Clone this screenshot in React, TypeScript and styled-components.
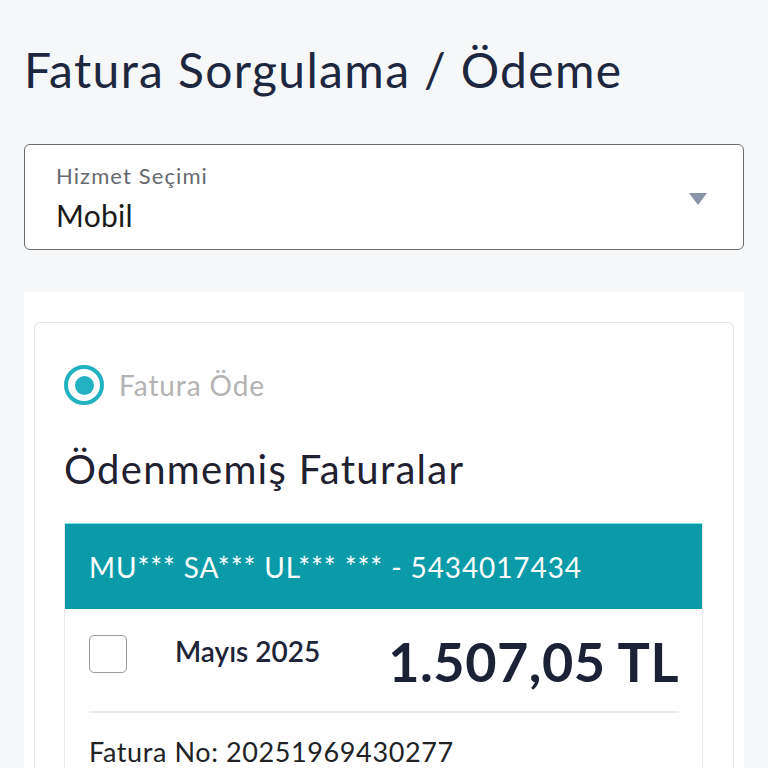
import { createGlobalStyle, styled } from 'styled-components';

const GlobalStyle = createGlobalStyle`
  html, body {
    margin: 0;
    padding: 0;
    background: #f6f7f9;
    font-family: Lato, "Noto Sans", sans-serif;
  }
  * {
    box-sizing: border-box;
  }
`;

const Page = styled.div`
  padding: 0 24px;
  min-height: 768px;
  display: flex;
  flex-direction: column;
`;

const Title = styled.h1`
  margin: 40px 0 0;
  font-size: 48px;
  line-height: 60px;
  font-weight: 400;
  color: #1e2740;
  letter-spacing: 1.35px;
`;

const Select = styled.div`
  margin-top: 44px;
  height: 106px;
  background: #ffffff;
  border: 1px solid #6c6c6c;
  border-radius: 6px;
  padding: 17px 36px 0 31px;
  display: flex;
  align-items: center;
  justify-content: space-between;
`;

const SelectText = styled.div`
  display: flex;
  flex-direction: column;
  align-self: flex-start;
`;

const SelectLabel = styled.span`
  font-size: 22px;
  line-height: 28px;
  color: #666a70;
  letter-spacing: 1.1px;
`;

const SelectValue = styled.span`
  margin-top: 6px;
  font-size: 30px;
  line-height: 38px;
  color: #1a1a1a;
  letter-spacing: 0.3px;
`;

const Arrow = styled.span`
  width: 0;
  height: 0;
  border-left: 9px solid transparent;
  border-right: 9px solid transparent;
  border-top: 12px solid #8a94aa;
  margin-top: -14px;
`;

const Panel = styled.div`
  margin-top: 42px;
  flex: 1;
  background: #ffffff;
  padding: 30px 10px 0;
`;

const Card = styled.div`
  border: 1px solid #e4e6e9;
  border-bottom: none;
  border-radius: 6px 6px 0 0;
  padding: 42px 30px 0 29px;
`;

const RadioRow = styled.label`
  display: flex;
  align-items: center;
  gap: 15px;
`;

const Radio = styled.span`
  width: 40px;
  height: 40px;
  border-radius: 50%;
  border: 4px solid #22b2c2;
  display: flex;
  align-items: center;
  justify-content: center;

  &::after {
    content: '';
    width: 19px;
    height: 19px;
    border-radius: 50%;
    background: #22b2c2;
  }
`;

const RadioText = styled.span`
  font-size: 28px;
  color: #b3b3b3;
  letter-spacing: 0.9px;
`;

const SectionTitle = styled.h2`
  margin: 40px 0 0;
  font-size: 40px;
  line-height: 48px;
  font-weight: 400;
  color: #1f2130;
  letter-spacing: 1.3px;
`;

const Bill = styled.div`
  margin-top: 30px;
  border-left: 1px solid #e6e7e9;
  border-right: 1px solid #e6e7e9;
`;

const BillHead = styled.div`
  height: 86px;
  background: #0b9ba8;
  border-top: 1px solid #7fe3ec;
  display: flex;
  align-items: center;
  padding: 0 24px;
  font-size: 28px;
  color: #ffffff;
  letter-spacing: 0.9px;
`;

const BillBody = styled.div`
  padding: 24px 23px 0 24px;
`;

const BillRow = styled.div`
  display: flex;
  align-items: flex-start;
  padding-bottom: 20px;
  border-bottom: 2px solid #e8e9eb;
`;

const Check = styled.span`
  width: 38px;
  height: 38px;
  margin-top: 2px;
  border: 1.5px solid #9c9c9c;
  border-radius: 5px;
  flex-shrink: 0;
`;

const Month = styled.span`
  margin-left: 48px;
  font-size: 28px;
  line-height: 36px;
  font-weight: 600;
  color: #1e2438;
`;

const Amount = styled.span`
  margin-left: auto;
  font-size: 54px;
  line-height: 58px;
  font-weight: 700;
  color: #1c2236;
  letter-spacing: 0.5px;
`;

const BillNo = styled.div`
  margin-top: 22px;
  font-size: 27px;
  color: #202226;
  letter-spacing: 0.6px;
`;

export default function App() {
  return (
    <>
      <GlobalStyle />
      <Page>
        <Title>Fatura Sorgulama / Ödeme</Title>
        <Select>
          <SelectText>
            <SelectLabel>Hizmet Seçimi</SelectLabel>
            <SelectValue>Mobil</SelectValue>
          </SelectText>
          <Arrow />
        </Select>
        <Panel>
          <Card>
            <RadioRow>
              <Radio />
              <RadioText>Fatura Öde</RadioText>
            </RadioRow>
            <SectionTitle>Ödenmemiş Faturalar</SectionTitle>
            <Bill>
              <BillHead>MU*** SA*** UL*** *** - 5434017434</BillHead>
              <BillBody>
                <BillRow>
                  <Check />
                  <Month>Mayıs 2025</Month>
                  <Amount>1.507,05 TL</Amount>
                </BillRow>
                <BillNo>Fatura No: 20251969430277</BillNo>
              </BillBody>
            </Bill>
          </Card>
        </Panel>
      </Page>
    </>
  );
}
